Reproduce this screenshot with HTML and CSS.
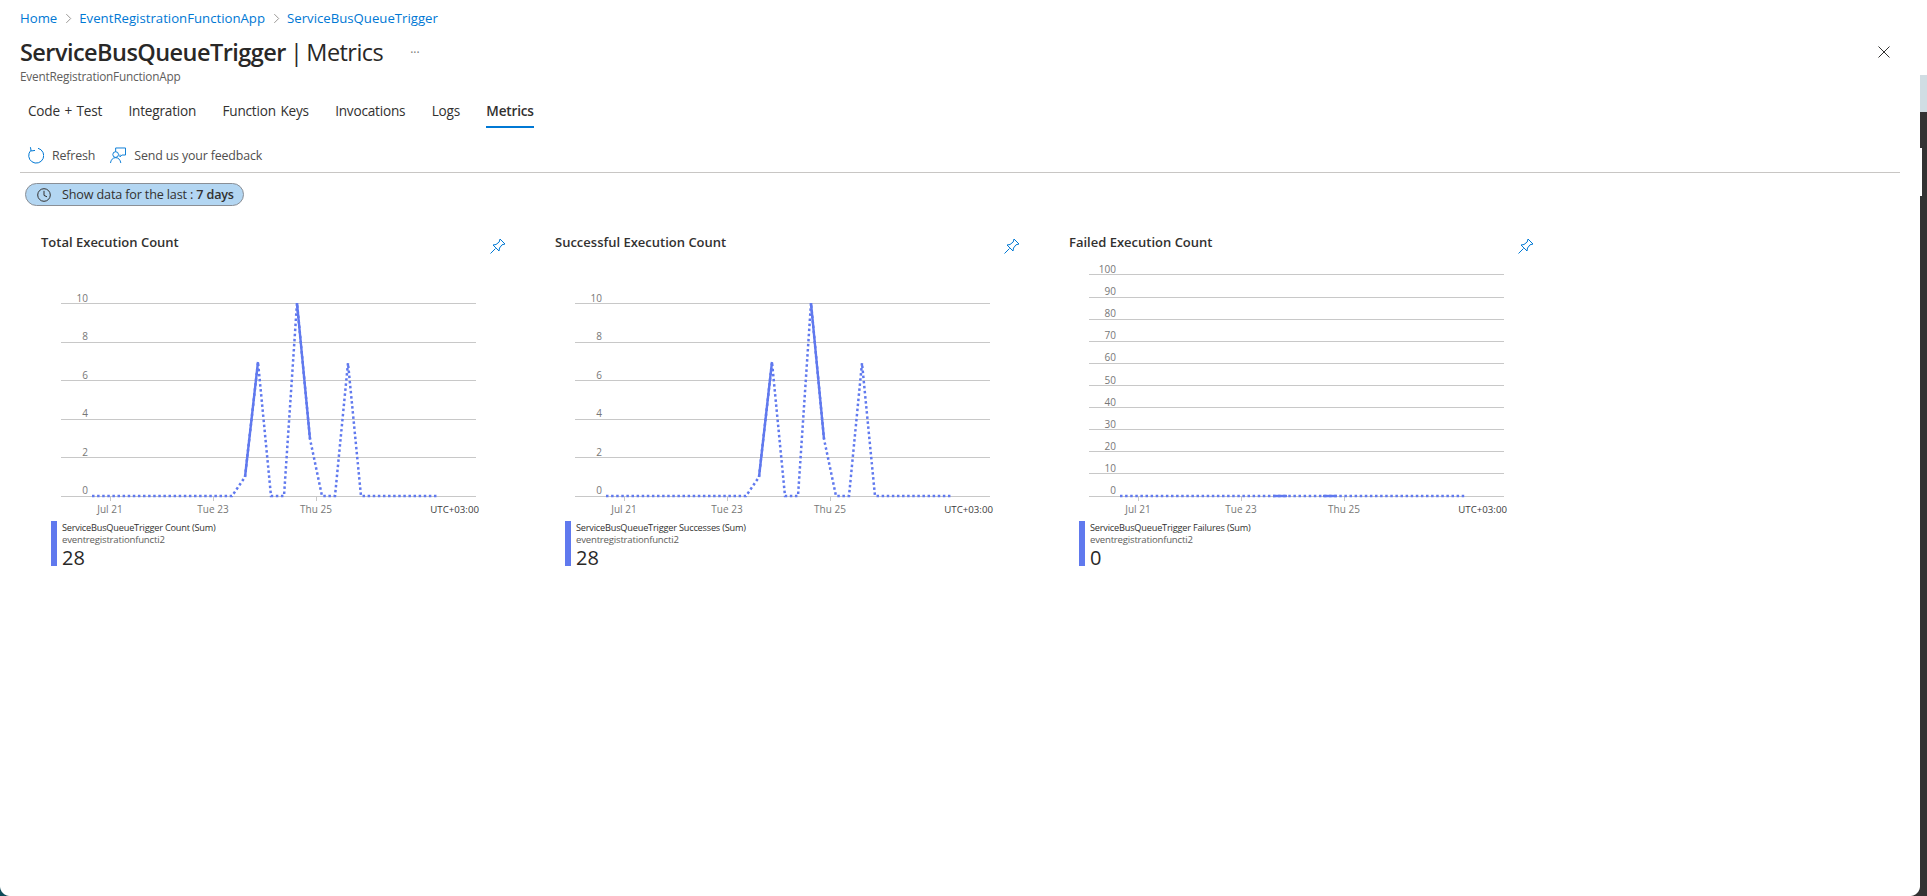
FILE: index.html
```html
<!DOCTYPE html>
<html lang="en">
<head>
    <meta charset="UTF-8">
    <meta name="viewport" content="width=device-width, initial-scale=1.0">
    <title>ServiceBusQueueTrigger | Metrics</title>
    <link rel="stylesheet" href="styles.css">
</head>
<body>
    <div class="page">
        <!-- breadcrumb -->
        <nav class="crumbs">
            <a href="#">Home</a>
            <svg class="crumb-sep" viewBox="0 0 8 12"><path d="M1.5 1 L6.5 6 L1.5 11"/></svg>
            <a href="#">EventRegistrationFunctionApp</a>
            <svg class="crumb-sep" viewBox="0 0 8 12"><path d="M1.5 1 L6.5 6 L1.5 11"/></svg>
            <a href="#">ServiceBusQueueTrigger</a>
        </nav>

        <!-- blade title -->
        <div class="blade-head">
            <h1 class="blade-title"><b>ServiceBusQueueTrigger</b> | Metrics</h1>
            <span class="blade-more">···</span>
            <svg class="blade-close" viewBox="0 0 12 12"><path d="M0.5 0.5 L11.5 11.5 M11.5 0.5 L0.5 11.5"/></svg>
        </div>
        <div class="blade-sub">EventRegistrationFunctionApp</div>

        <!-- tabs -->
        <div class="tabs">
            <a class="tab" href="#">Code + Test</a>
            <a class="tab" href="#">Integration</a>
            <a class="tab" href="#">Function Keys</a>
            <a class="tab" href="#">Invocations</a>
            <a class="tab" href="#">Logs</a>
            <a class="tab tab-active" href="#">Metrics</a>
        </div>

        <!-- toolbar -->
        <div class="toolbar">
            <span class="tool">
                <svg class="tool-icon" viewBox="0 0 16 17"><path d="M10 1.3 A7.5 7.5 0 1 1 2.8 3.4"/><path d="M2.4 0.2 L3.2 4 L7 3.4" class="thin"/></svg>
                Refresh
            </span>
            <span class="tool tool-feedback">
                <svg class="tool-icon" viewBox="0 0 17 17"><path d="M6 4.5 V0.5 H16.5 V8 H12.6 L10.6 10 V7.5"/><circle cx="6" cy="7.5" r="3"/><path d="M0.5 16.5 C1 13 3 10.8 6 10.8 C9 10.8 11 13 11.5 16.5"/></svg>
                Send us your feedback
            </span>
        </div>

        <!-- time range -->
        <div class="pill">
            <svg class="pill-icon" viewBox="0 0 14 14"><circle cx="7" cy="7" r="6.3"/><path d="M7 2.8 V7.4 L10 8.8"/></svg>
            <span>Show data for the last : <b>7 days</b></span>
        </div>

        <!-- charts -->
        <div class="charts">
            <section class="chart-card">
                <div class="chart-head">
                    <h2 class="chart-title">Total Execution Count</h2>
                    <svg class="pin" viewBox="0 0 16 16"><path d="M10 1 L15 6 L12 6.8 L9.5 10 L9 13 L3 7 L6 6.5 L9.2 4 Z M5.5 10.5 L0.5 15.5"/></svg>
                </div>
                <svg class="plot" viewBox="41 260 470 260">
                    <g class="grid">
                        <path d="M61 303.5 H476 M61 342.5 H476 M61 380.5 H476 M61 419.5 H476 M61 457.5 H476 M61 496.5 H476"/>
                        <path d="M110.5 496 V501 M213.5 496 V501 M316.5 496 V501"/>
                    </g>
                    <g class="y-labels">
                        <text x="88" y="302">10</text>
                        <text x="88" y="340">8</text>
                        <text x="88" y="379">6</text>
                        <text x="88" y="417">4</text>
                        <text x="88" y="456">2</text>
                        <text x="88" y="494">0</text>
                    </g>
                    <g class="x-labels">
                        <text x="110" y="513">Jul 21</text>
                        <text x="213" y="513">Tue 23</text>
                        <text x="316" y="513">Thu 25</text>
                    </g>
                    <text class="utc" x="479" y="513">UTC+03:00</text>
                    <polyline class="dotted" points="92,496 232,496 245,477 258,362 271,496 284,496 297,303 310,439 322,496 335,496 348,363 361,496 438,496"/>
                    <polyline class="solid" points="245,477 258,362"/>
                    <polyline class="solid" points="297,303 310,439"/>
                </svg>
                <div class="legend">
                    <div class="legend-name">ServiceBusQueueTrigger Count (Sum)</div>
                    <div class="legend-res">eventregistrationfuncti2</div>
                    <div class="legend-num">28</div>
                </div>
            </section>

            <section class="chart-card">
                <div class="chart-head">
                    <h2 class="chart-title">Successful Execution Count</h2>
                    <svg class="pin" viewBox="0 0 16 16"><path d="M10 1 L15 6 L12 6.8 L9.5 10 L9 13 L3 7 L6 6.5 L9.2 4 Z M5.5 10.5 L0.5 15.5"/></svg>
                </div>
                <svg class="plot" viewBox="41 260 470 260">
                    <g class="grid">
                        <path d="M61 303.5 H476 M61 342.5 H476 M61 380.5 H476 M61 419.5 H476 M61 457.5 H476 M61 496.5 H476"/>
                        <path d="M110.5 496 V501 M213.5 496 V501 M316.5 496 V501"/>
                    </g>
                    <g class="y-labels">
                        <text x="88" y="302">10</text>
                        <text x="88" y="340">8</text>
                        <text x="88" y="379">6</text>
                        <text x="88" y="417">4</text>
                        <text x="88" y="456">2</text>
                        <text x="88" y="494">0</text>
                    </g>
                    <g class="x-labels">
                        <text x="110" y="513">Jul 21</text>
                        <text x="213" y="513">Tue 23</text>
                        <text x="316" y="513">Thu 25</text>
                    </g>
                    <text class="utc" x="479" y="513">UTC+03:00</text>
                    <polyline class="dotted" points="92,496 232,496 245,477 258,362 271,496 284,496 297,303 310,439 322,496 335,496 348,363 361,496 438,496"/>
                    <polyline class="solid" points="245,477 258,362"/>
                    <polyline class="solid" points="297,303 310,439"/>
                </svg>
                <div class="legend">
                    <div class="legend-name">ServiceBusQueueTrigger Successes (Sum)</div>
                    <div class="legend-res">eventregistrationfuncti2</div>
                    <div class="legend-num">28</div>
                </div>
            </section>

            <section class="chart-card">
                <div class="chart-head">
                    <h2 class="chart-title">Failed Execution Count</h2>
                    <svg class="pin" viewBox="0 0 16 16"><path d="M10 1 L15 6 L12 6.8 L9.5 10 L9 13 L3 7 L6 6.5 L9.2 4 Z M5.5 10.5 L0.5 15.5"/></svg>
                </div>
                <svg class="plot" viewBox="41 260 470 260">
                    <g class="grid">
                        <path d="M61 274.5 H476 M61 297.5 H476 M61 319.5 H476 M61 341.5 H476 M61 363.5 H476 M61 385.5 H476 M61 407.5 H476 M61 429.5 H476 M61 451.5 H476 M61 473.5 H476 M61 496.5 H476"/>
                        <path d="M110.5 496 V501 M213.5 496 V501 M316.5 496 V501"/>
                    </g>
                    <g class="y-labels">
                        <text x="88" y="273">100</text>
                        <text x="88" y="295">90</text>
                        <text x="88" y="317">80</text>
                        <text x="88" y="339">70</text>
                        <text x="88" y="361">60</text>
                        <text x="88" y="384">50</text>
                        <text x="88" y="406">40</text>
                        <text x="88" y="428">30</text>
                        <text x="88" y="450">20</text>
                        <text x="88" y="472">10</text>
                        <text x="88" y="494">0</text>
                    </g>
                    <g class="x-labels">
                        <text x="110" y="513">Jul 21</text>
                        <text x="213" y="513">Tue 23</text>
                        <text x="316" y="513">Thu 25</text>
                    </g>
                    <text class="utc" x="479" y="513">UTC+03:00</text>
                    <polyline class="dotted" points="92,496 438,496"/>
                    <polyline class="solid" points="245,496 259,496"/>
                    <polyline class="solid" points="295,496 309,496"/>
                </svg>
                <div class="legend">
                    <div class="legend-name">ServiceBusQueueTrigger Failures (Sum)</div>
                    <div class="legend-res">eventregistrationfuncti2</div>
                    <div class="legend-num">0</div>
                </div>
            </section>
        </div>
    </div>

    <!-- bits of the desktop showing behind the window -->
    <div class="edge-strip"></div>
    <div class="edge-notch"></div>
    <div class="corner-left"></div>
    <div class="corner-right"></div>
</body>
</html>
```

FILE: styles.css
```css
* {
    margin: 0;
    padding: 0;
    box-sizing: border-box;
}

html, body {
    height: 100%;
    overflow: hidden;
    background-color: #fff;
}

body {
    position: relative;
    font-family: "Open Sans", "Noto Sans", sans-serif;
    color: #323130;
}

a {
    text-decoration: none;
}

.page {
    width: 1920px;
    padding-top: 9px;
}

/* breadcrumb */
.crumbs {
    display: flex;
    align-items: center;
    height: 18px;
    padding-left: 20px;
    font-size: 13.2px;
}

.crumbs a {
    color: #0078d4;
}

.crumb-sep {
    width: 7px;
    height: 11px;
    margin: 0 7px 0 8px;
    fill: none;
    stroke: #8a8886;
    stroke-width: 1;
}

/* blade title */
.blade-head {
    display: flex;
    align-items: center;
    height: 32px;
    margin-top: 9px;
    padding: 0 20px;
}

.blade-title {
    font-size: 23.5px;
    font-weight: 400;
    letter-spacing: -0.55px;
    word-spacing: -1.5px;
    color: #292827;
}

.blade-title b {
    font-weight: 600;
}

.blade-more {
    margin-left: 27px;
    font-size: 12px;
    color: #777;
}

.blade-close {
    width: 12px;
    height: 12px;
    margin-left: auto;
    margin-right: 10px;
    fill: none;
    stroke: #323130;
    stroke-width: 1;
}

.blade-sub {
    height: 16px;
    padding-left: 20px;
    font-size: 11.8px;
    line-height: 16px;
    letter-spacing: -0.2px;
    color: #605e5c;
}

/* tabs */
.tabs {
    display: flex;
    gap: 26.3px;
    margin-top: 16px;
    padding-left: 28px;
}

.tab {
    height: 28px;
    border-bottom: 2px solid transparent;
    font-size: 13.6px;
    line-height: 22px;
    letter-spacing: -0.2px;
    word-spacing: 1.2px;
    color: #323130;
}

.tab-active {
    border-bottom-color: #0078d4;
    font-weight: 600;
}

/* toolbar */
.toolbar {
    display: flex;
    align-items: center;
    width: 1880px;
    height: 30px;
    margin-top: 15px;
    margin-left: 20px;
    padding: 0 0 4px 8px;
    border-bottom: 1px solid #c8c6c4;
}

.tool {
    display: flex;
    align-items: center;
    gap: 8px;
    font-size: 12.4px;
    letter-spacing: -0.15px;
    color: #4f4e4d;
}

.tool-feedback {
    margin-left: 15px;
}

.tool-icon {
    width: 16px;
    height: 17px;
    fill: none;
    stroke: #0078d4;
    stroke-width: 1;
}

/* time range */
.pill {
    display: flex;
    align-items: center;
    gap: 11px;
    width: 219px;
    height: 23px;
    margin-top: 10px;
    margin-left: 25px;
    padding-left: 11px;
    background-color: #b3d6f2;
    border: 1px solid #8a8f96;
    border-radius: 12px;
    font-size: 12.6px;
    letter-spacing: -0.15px;
    color: #323130;
}

.pill b {
    font-weight: 600;
}

.pill-icon {
    width: 14px;
    height: 14px;
    fill: none;
    stroke: #323130;
    stroke-width: 1;
}

/* charts */
.charts {
    display: grid;
    grid-template-columns: repeat(3, 514px);
    margin-top: 20px;
    margin-left: 20px;
}

.chart-head {
    display: flex;
    justify-content: space-between;
    align-items: flex-start;
    height: 34px;
    padding-left: 21px;
    padding-right: 28px;
}

.chart-title {
    font-size: 13px;
    font-weight: 600;
    line-height: 32px;
    height: 32px;
    color: #323130;
}

.pin {
    width: 16px;
    height: 16px;
    margin-top: 12px;
    fill: none;
    stroke: #0078d4;
    stroke-width: 1;
}

.plot {
    display: block;
    width: 470px;
    height: 260px;
    margin-left: 21px;
    font-size: 10px;
}

.grid path {
    fill: none;
    stroke: #c8c8c8;
    stroke-width: 1;
}

.y-labels text {
    text-anchor: end;
    fill: #777;
}

.x-labels text {
    text-anchor: middle;
    fill: #777;
}

.utc {
    text-anchor: end;
    font-size: 9.7px;
    fill: #3c3c3c;
}

.dotted {
    fill: none;
    stroke: #6079ee;
    stroke-width: 2.5;
    stroke-dasharray: 2.5 2.6;
}

.solid {
    fill: none;
    stroke: #6079ee;
    stroke-width: 2.4;
}

.legend {
    width: 240px;
    height: 45px;
    margin-top: 1px;
    margin-left: 31px;
    padding-top: 1px;
    padding-left: 5px;
    border-left: 6px solid #6079ee;
    white-space: nowrap;
}

.legend-name {
    height: 12px;
    font-size: 9.2px;
    line-height: 12px;
    letter-spacing: -0.2px;
    color: #323130;
}

.legend-res {
    height: 12px;
    font-size: 9.6px;
    line-height: 12px;
    letter-spacing: -0.2px;
    color: #605e5c;
}

.legend-num {
    font-size: 20px;
    line-height: 23px;
    color: #292827;
}

/* desktop behind the window */
.edge-strip {
    position: absolute;
    top: 75px;
    right: 0;
    bottom: 0;
    width: 7px;
    background: linear-gradient(#d0dde3 0, #d0dde3 37px, #333 37px);
}

.edge-notch {
    position: absolute;
    top: 148px;
    left: 1920px;
    width: 2px;
    height: 48px;
    background-color: #fff;
}

.corner-left {
    position: absolute;
    left: 0;
    bottom: 0;
    width: 10px;
    height: 10px;
    background: radial-gradient(circle at 100% 0, transparent 9.5px, #0e4a58 10.5px);
}

.corner-right {
    position: absolute;
    left: 1910px;
    bottom: 0;
    width: 10px;
    height: 10px;
    background: radial-gradient(circle at 0 0, transparent 9.5px, #333 10.5px);
}
```
